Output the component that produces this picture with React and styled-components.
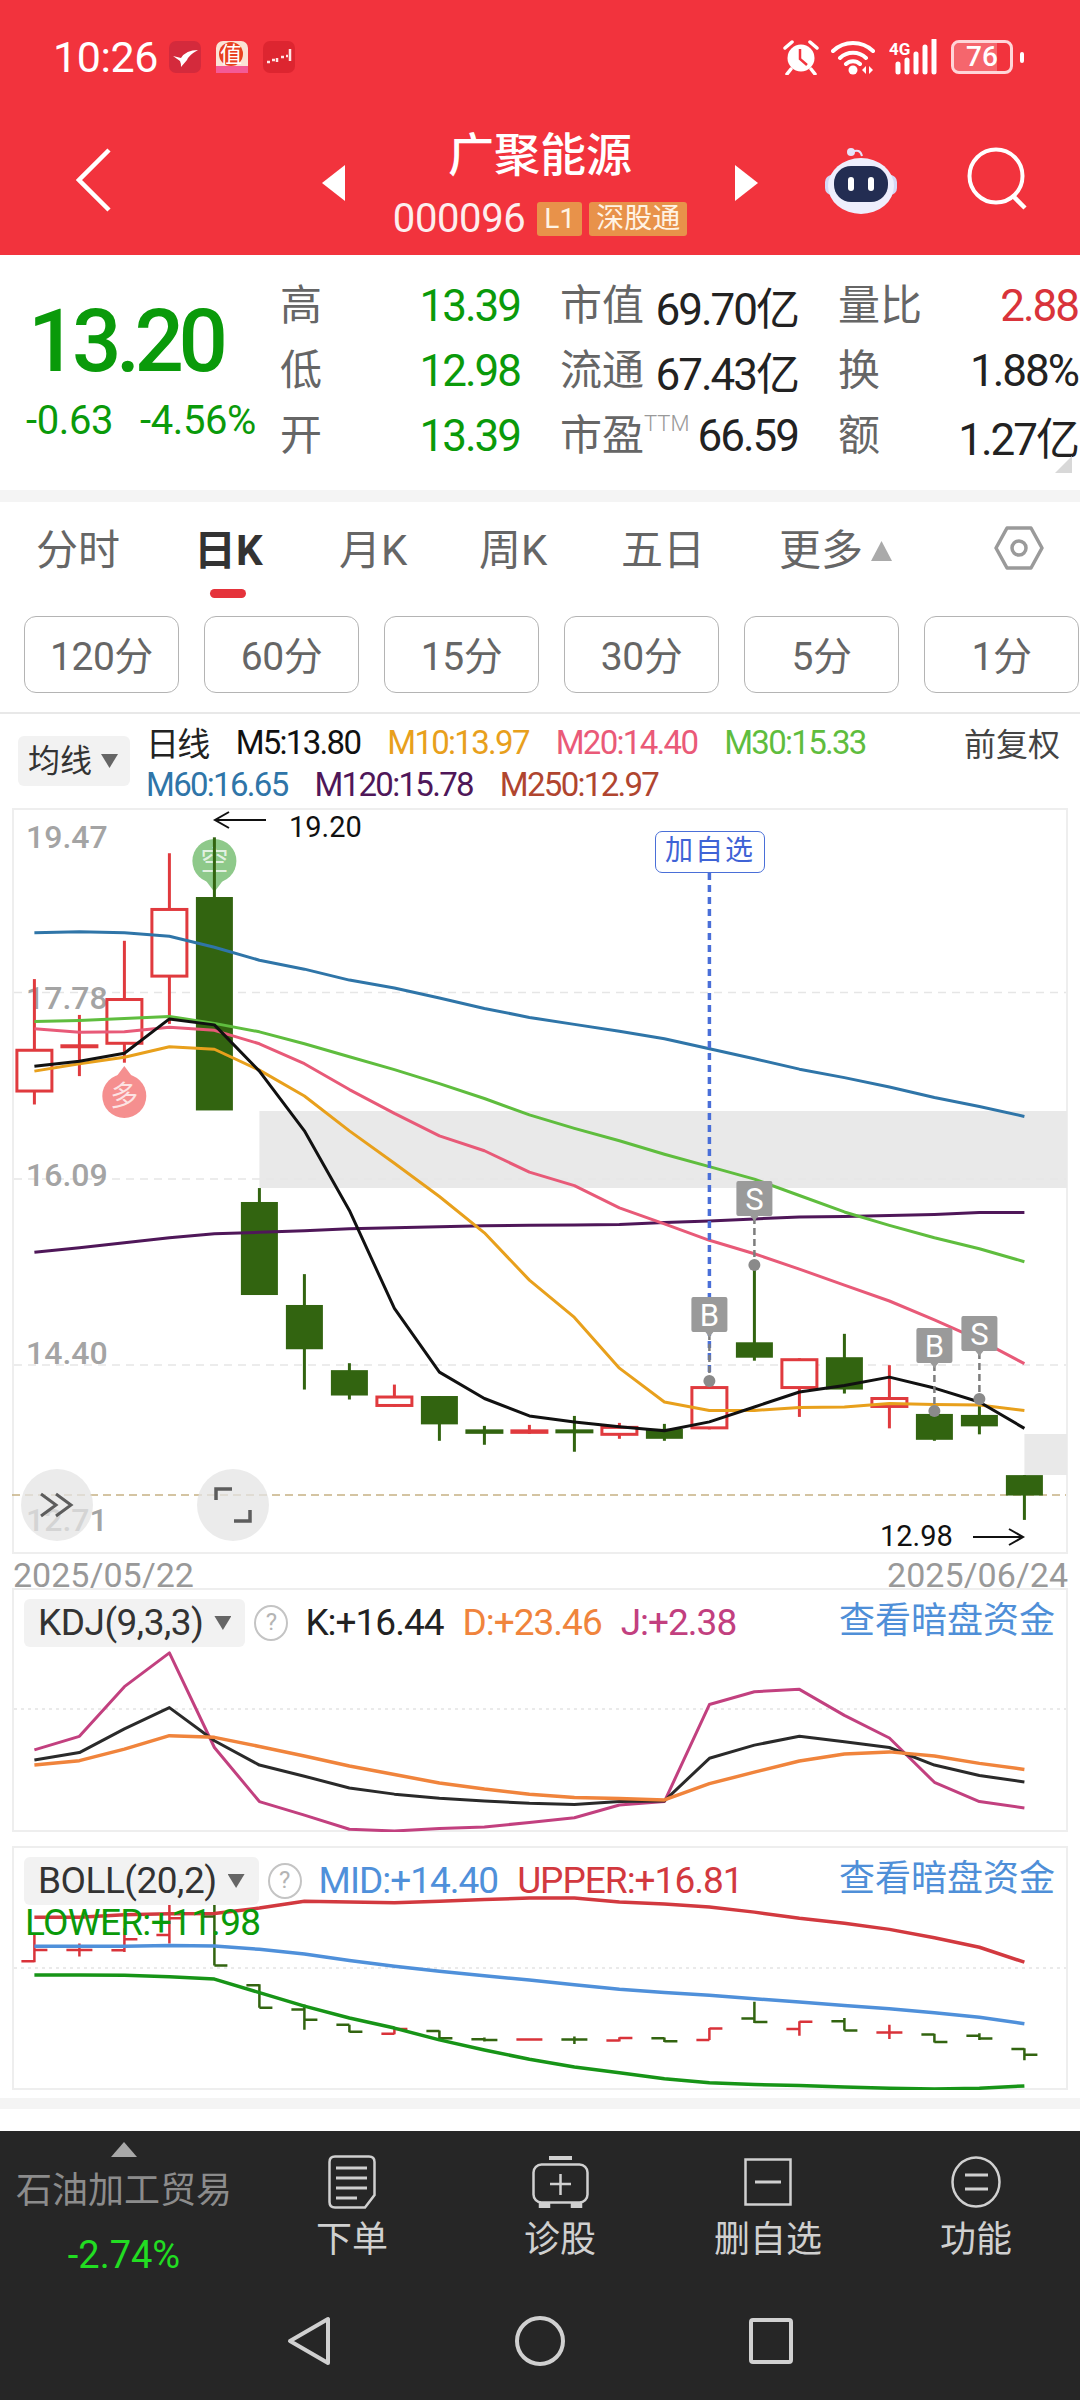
import React from 'react';
import styled, { createGlobalStyle } from 'styled-components';

const FONT = 'Roboto, "Noto Sans CJK SC", sans-serif';
const RED = '#f2333d';
const GREEN = '#0a9a0a';

const cx = (i) => 34.4 + 45 * i;
// chart data was read off in plot units, these map it to page y
const mainY = (z) => 800 + z / 2.01;
const subY = (z) => 1570 + z / 2.958;

const MA_LINES = [
  { color: '#2f75a8', ys: [267, 265, 267, 274, 296, 322, 340, 362, 378, 398, 419, 437, 451, 465, 480, 500, 520, 541, 558, 577, 598, 616, 636] },
  { color: '#4f1759', ys: [909, 900, 890, 880, 872, 869, 866, 862, 860, 858, 856, 855, 854, 853, 849, 846, 842, 838, 837, 835, 833, 829, 829] },
  { color: '#5fbd3e', ys: [445, 443, 439, 435, 449, 466, 490, 516, 542, 570, 600, 633, 660, 685, 712, 737, 762, 795, 828, 855, 880, 902, 928] },
  { color: '#e85a78', ys: [460, 467, 466, 457, 463, 490, 530, 582, 630, 675, 705, 748, 775, 820, 852, 885, 912, 943, 975, 1007, 1045, 1085, 1133] },
  { color: '#e8a01c', ys: [545, 530, 517, 496, 501, 543, 595, 665, 730, 797, 870, 965, 1040, 1142, 1210, 1227, 1227, 1221, 1220, 1213, 1215, 1216, 1227] },
  { color: '#111111', ys: [535, 525, 509, 440, 452, 545, 665, 825, 1022, 1150, 1203, 1238, 1250, 1260, 1268, 1250, 1220, 1190, 1177, 1160, 1182, 1210, 1263] },
];

// top, bottom, wick top, wick bottom, up
const CANDLES = [
  [500, 588, 360, 612, 1], [491, 499, 432, 555, 1], [398, 492, 283, 528, 1], [217, 357, 107, 450, 1],
  [195, 624, 75, 195, 0], [808, 995, 780, 995, 0], [1015, 1104, 953, 1185, 0], [1146, 1197, 1132, 1205, 0],
  [1197, 1220, 1175, 1220, 1], [1198, 1255, 1198, 1288, 0], [1265, 1274, 1258, 1296, 0], [1265, 1274, 1256, 1274, 1],
  [1265, 1271, 1238, 1310, 0], [1258, 1278, 1252, 1284, 1], [1264, 1284, 1254, 1288, 0], [1178, 1265, 1178, 1265, 1],
  [1090, 1121, 935, 1127, 0], [1122, 1184, 1122, 1240, 1], [1120, 1185, 1073, 1193, 0], [1200, 1222, 1136, 1263, 1],
  [1234, 1286, 1234, 1288, 0], [1236, 1259, 1215, 1275, 0], [1357, 1398, 1357, 1447, 0],
];

const KDJ_LINES = [
  { color: '#c2407f', ys: [532, 492, 345, 245, 525, 685, 725, 767, 772, 765, 760, 747, 733, 695, 685, 398, 360, 353, 430, 497, 628, 685, 704] },
  { color: '#2a2a2a', ys: [562, 540, 470, 407, 505, 577, 610, 645, 663, 675, 683, 690, 694, 685, 683, 557, 518, 492, 508, 525, 577, 608, 627] },
  { color: '#f0843c', ys: [577, 564, 530, 490, 495, 522, 550, 580, 605, 630, 648, 663, 673, 676, 680, 632, 598, 565, 544, 538, 550, 572, 590] },
];

const BOLL_LINES = [
  { color: '#d2393f', ys: [1027, 1027, 1020, 1017, 1016, 1000, 980, 982, 984, 980, 975, 970, 970, 982, 988, 997, 1012, 1030, 1045, 1063, 1088, 1116, 1160] },
  { color: '#4f90da', ys: [1113, 1113, 1113, 1111, 1112, 1122, 1136, 1155, 1172, 1187, 1200, 1213, 1227, 1240, 1250, 1258, 1268, 1278, 1288, 1298, 1310, 1323, 1342] },
  { color: '#179417', ys: [1198, 1198, 1199, 1203, 1210, 1250, 1290, 1325, 1355, 1390, 1420, 1447, 1470, 1487, 1505, 1517, 1522, 1525, 1529, 1533, 1535, 1533, 1526] },
];

// high, low, left tick, right tick, up
const BOLL_BARS = [
  [1080, 1160, 1157, 1124, 1], [1105, 1143, 1124, 1124, 1], [1060, 1130, 1125, 1092, 1], [990, 1105, 1080, 1030, 1],
  [985, 1170, 1025, 1170, 0], [1225, 1295, 1228, 1295, 0], [1285, 1360, 1300, 1330, 0], [1345, 1367, 1345, 1366, 0],
  [1355, 1373, 1372, 1358, 1], [1362, 1390, 1364, 1385, 0], [1383, 1395, 1388, 1390, 0], [1385, 1392, 1389, 1389, 1],
  [1380, 1402, 1389, 1389, 0], [1382, 1395, 1392, 1384, 1], [1383, 1396, 1385, 1394, 0], [1355, 1390, 1390, 1356, 1],
  [1277, 1340, 1327, 1337, 0], [1335, 1378, 1358, 1336, 1], [1325, 1362, 1335, 1362, 0], [1345, 1387, 1368, 1368, 1],
  [1372, 1398, 1374, 1396, 0], [1370, 1390, 1378, 1386, 0], [1415, 1450, 1417, 1434, 0],
];

const TRADE_MARKS = [
  { i: 15, letter: 'B', top: 1297, dot: 1381 },
  { i: 16, letter: 'S', top: 1181, dot: 1265 },
  { i: 20, letter: 'B', top: 1328, dot: 1411 },
  { i: 21, letter: 'S', top: 1316, dot: 1399 },
];

const STATS = [
  { label: '高', value: '13.39', color: GREEN },
  { label: '市值', value: '69.70亿' },
  { label: '量比', value: '2.88', color: '#d9333a' },
  { label: '低', value: '12.98', color: GREEN },
  { label: '流通', value: '67.43亿' },
  { label: '换', value: '1.88%' },
  { label: '开', value: '13.39', color: GREEN },
  { label: '市盈', ttm: true, value: '66.59' },
  { label: '额', value: '1.27亿' },
];

const TABS = ['分时', '日K', '月K', '周K', '五日'];
const INTERVALS = ['120分', '60分', '15分', '30分', '5分', '1分'];

function Line({ ys, color, toY, width = 3 }) {
  const points = ys.map((z, i) => `${cx(i)},${toY(z)}`).join(' ');
  return <polyline points={points} fill="none" stroke={color} strokeWidth={width} strokeLinejoin="round" />;
}

function Candle({ data, i }) {
  const [top, bottom, wickTop, wickBottom, up] = data;
  const x = cx(i);
  const y1 = mainY(top);
  const y2 = mainY(bottom);
  const color = up ? '#e03a3e' : '#326410';
  const thin = y2 - y1 < 6;
  return (
    <g>
      <line x1={x} x2={x} y1={mainY(wickTop)} y2={mainY(wickBottom)} stroke={color} strokeWidth="3" />
      {thin ? (
        <rect x={x - 19} y={y1} width="38" height={Math.max(y2 - y1, 4)} fill={color} />
      ) : up ? (
        <rect x={x - 17.5} y={y1 + 1.5} width="35" height={y2 - y1 - 3} fill="#fff" stroke={color} strokeWidth="3" />
      ) : (
        <rect x={x - 18.5} y={y1} width="37" height={y2 - y1} fill={color} />
      )}
    </g>
  );
}

function TradeMark({ i, letter, top, dot }) {
  const x = cx(i);
  return (
    <g>
      <line x1={x} x2={x} y1={top + 36} y2={dot} stroke="#7d7d7d" strokeWidth="2.5" strokeDasharray="7 4" />
      <circle cx={x} cy={dot} r="6" fill="#8a8a8a" />
      <path
        d={`M${x - 18} ${top + 2}q0 -2 2 -2h32q2 0 2 2v31q0 2 -2 2h-12l-4 5l-4 -5h-12q-2 0 -2 -2z`}
        fill="#9a9a9a"
      />
      <MarkLetter x={x} y={top + 29}>{letter}</MarkLetter>
    </g>
  );
}

function MainPlot() {
  return (
    <Plot viewBox="12 808 1056 746">
      <rect x={cx(5)} y="1111" width={1067 - cx(5)} height="77" fill="#e9e9e9" />
      <rect x={cx(22)} y="1434" width={1067 - cx(22)} height="41" fill="#e9e9e9" />
      {[992.5, 1179, 1365].map((y) => (
        <line key={y} x1="14" x2="1066" y1={y} y2={y} stroke="#e6e6e6" strokeWidth="1.5" strokeDasharray="8 6" />
      ))}
      <line x1="12" x2="1066" y1="1495" y2="1495" stroke="#c6b184" strokeWidth="1.5" strokeDasharray="8 5" />

      <AxisLabel x="26" y="848">19.47</AxisLabel>
      <AxisLabel x="26" y="1009">17.78</AxisLabel>
      <AxisLabel x="26" y="1186">16.09</AxisLabel>
      <AxisLabel x="26" y="1364">14.40</AxisLabel>
      <AxisLabel x="26" y="1531">12.71</AxisLabel>

      <circle cx="124.3" cy="1096" r="22" fill="#f58f8f" />
      <path d="M124.3 1066l9 12h-18z" fill="#f58f8f" />
      <MarkGlyph x="124.3" y="1106">多</MarkGlyph>
      <circle cx={cx(4)} cy="861" r="22" fill="#8ec98a" />
      <path d="M214.4 892l9 -12h-18z" fill="#8ec98a" />
      <MarkGlyph x={cx(4)} y="871">空</MarkGlyph>

      {CANDLES.map((c, i) => (
        <Candle key={i} data={c} i={i} />
      ))}
      {MA_LINES.map((l) => (
        <Line key={l.color} ys={l.ys} color={l.color} toY={mainY} />
      ))}

      <line x1={cx(15)} x2={cx(15)} y1="873" y2="1381" stroke="#4a6fd8" strokeWidth="3.5" strokeDasharray="7 5" />
      {TRADE_MARKS.map((m) => (
        <TradeMark key={m.i} {...m} />
      ))}

      <path d="M266 820h-50M229 812l-14 8l14 8" fill="none" stroke="#111" strokeWidth="2" />
      <PriceNote x="289" y="837">19.20</PriceNote>
      <PriceNote x="880" y="1546">12.98</PriceNote>
      <path d="M973 1537h50M1009 1529l14 8l-14 8" fill="none" stroke="#111" strokeWidth="2" />
    </Plot>
  );
}

function KdjPlot() {
  return (
    <Plot viewBox="12 1588 1056 244">
      <line x1="14" x2="1066" y1="1709" y2="1709" stroke="#e4e4e4" strokeWidth="1.5" strokeDasharray="3 4" />
      {KDJ_LINES.map((l) => (
        <Line key={l.color} ys={l.ys} color={l.color} toY={subY} width={l.color === '#f0843c' ? 3.5 : 3} />
      ))}
    </Plot>
  );
}

function BollPlot() {
  return (
    <Plot viewBox="12 1846 1056 244">
      <line x1="14" x2="1066" y1="1968" y2="1968" stroke="#e4e4e4" strokeWidth="1.5" strokeDasharray="3 4" />
      {BOLL_BARS.map(([hi, lo, left, right, up], i) => {
        const x = cx(i);
        return (
          <path
            key={i}
            d={`M${x} ${subY(hi)}V${subY(lo)}M${x - 13} ${subY(left)}H${x}M${x} ${subY(right)}H${x + 13}`}
            fill="none"
            stroke={up ? '#d9333a' : '#326410'}
            strokeWidth="2.5"
          />
        );
      })}
      {BOLL_LINES.map((l) => (
        <Line key={l.color} ys={l.ys} color={l.color} toY={subY} width={3.5} />
      ))}
    </Plot>
  );
}

function StatusIcons() {
  return (
    <StatusRight>
      <svg width="36" height="36" viewBox="0 0 36 36">
        <circle cx="18" cy="19" r="13.5" fill="#fff" />
        <path d="M17 10v10l7 6" fill="none" stroke={RED} strokeWidth="2.5" />
        <path d="M2 9l7-6M34 9l-7-6M8 30l-4 5M28 30l4 5" stroke="#fff" strokeWidth="3.5" strokeLinecap="round" />
      </svg>
      <svg width="46" height="36" viewBox="0 0 46 36">
        <path d="M2 12a29 29 0 0 1 40 0M9 19a19 19 0 0 1 26 0M15 25a10 10 0 0 1 14 0" fill="none" stroke="#fff" strokeWidth="4" strokeLinecap="round" />
        <circle cx="22" cy="31" r="4.5" fill="#fff" />
        <path d="M35 27l-4 4l4 4zM38 27l4 4l-4 4z" fill="#fff" />
      </svg>
      <svg width="50" height="36" viewBox="0 0 50 36">
        <NetworkText x="0" y="16">4G</NetworkText>
        <path d="M9 25v8M18 21v12M27 15v18M36 8v25M45 1v32" stroke="#fff" strokeWidth="5" strokeLinecap="round" />
      </svg>
      <Battery>
        <BatteryFill />
        <BatteryValue>76</BatteryValue>
      </Battery>
      <BatteryTip />
    </StatusRight>
  );
}

function AppIcons() {
  return (
    <>
      <svg width="32" height="32" viewBox="0 0 32 32">
        <rect width="32" height="32" rx="7" fill="#d42a3c" />
        <path d="M4 15l8 2q5-8 17-8q-9 5-11 10l-6 7q0-4-1-6z" fill="#fff" />
      </svg>
      <svg width="32" height="32" viewBox="0 0 32 32">
        <rect width="32" height="32" rx="7" fill="#fbe3d6" />
        <rect y="25" width="32" height="7" fill="#f45a96" />
        <circle cx="15" cy="13" r="12" fill="#e8401f" />
        <AppGlyph x="15" y="21">值</AppGlyph>
      </svg>
      <svg width="32" height="32" viewBox="0 0 32 32">
        <rect width="32" height="32" rx="7" fill="#dd2530" />
        <path d="M4 21h3M9 19h3M14 17v4M18 16h3M23 15h2M27 8v12" stroke="#ffe4e4" strokeWidth="2.5" />
      </svg>
    </>
  );
}

function RobotIcon() {
  return (
    <svg width="72" height="68" viewBox="0 0 72 68">
      <path d="M27 5q8 -4 10 4" fill="none" stroke="#e6e3fa" strokeWidth="2" />
      <circle cx="26" cy="5" r="4" fill="#e6e3fa" />
      <rect x="0" y="28" width="72" height="20" rx="7" fill="#d5d7f5" />
      <ellipse cx="36" cy="39" rx="33" ry="28" fill="#eeeefc" />
      <rect x="9" y="19" width="54" height="36" rx="17" fill="#232d52" />
      <rect x="23" y="30" width="6" height="14" rx="3" fill="#fff" />
      <rect x="43" y="30" width="6" height="14" rx="3" fill="#fff" />
    </svg>
  );
}

function DocIcon() {
  return (
    <svg width="48" height="54" viewBox="0 0 48 54" fill="none" stroke="#d0d0d0" strokeWidth="2.5">
      <path d="M7 1.500h34q5.500 0 5.500 5.500v33L37 52.500H7q-5.500 0-5.500-5.500V7q0-5.500 5.500-5.500z" />
      <path d="M8 13h31M8 23h31M8 33h31M8 43h21" strokeWidth="3" />
    </svg>
  );
}

function WatchIcon() {
  return (
    <svg width="57" height="52" viewBox="0 0 57 52" fill="none" stroke="#d0d0d0" strokeWidth="2.5">
      <path d="M17 2h23" strokeWidth="4" />
      <rect x="1.500" y="8.500" width="54" height="38" rx="8" />
      <path d="M28.500 18v21M18 28h21" />
      <path d="M8 48h9v3H8zM40 48h9v3h-9z" fill="#d0d0d0" />
    </svg>
  );
}

function RemoveIcon() {
  return (
    <svg width="48" height="48" viewBox="0 0 48 48" fill="none" stroke="#d0d0d0" strokeWidth="2.5">
      <rect x="1.500" y="1.500" width="45" height="45" />
      <path d="M11 24h26" strokeWidth="3" />
    </svg>
  );
}

function MenuIcon() {
  return (
    <svg width="50" height="52" viewBox="0 0 50 52" fill="none" stroke="#d0d0d0" strokeWidth="2.500">
      <ellipse cx="25" cy="26" rx="23.500" ry="24.500" />
      <path d="M14 19h23M14 33h23" strokeWidth="3" />
    </svg>
  );
}

const NAV_ITEMS = [
  { label: '下单', Icon: DocIcon },
  { label: '诊股', Icon: WatchIcon },
  { label: '删自选', Icon: RemoveIcon },
  { label: '功能', Icon: MenuIcon },
];

export default function App() {
  return (
    <Page>
      <GlobalStyle />
      <Header>
        <StatusBar>
          <StatusLeft>
            <Clock>10:26</Clock>
            <AppIcons />
          </StatusLeft>
          <StatusIcons />
        </StatusBar>
        <TitleBar>
          <BackCell>
            <svg width="36" height="64" viewBox="0 0 36 64">
              <path d="M33 2L3 32l30 30" fill="none" stroke="#fff" strokeWidth="4.500" />
            </svg>
          </BackCell>
          <TitleCell>
            <Arrow $dir="left" />
            <TitleText>
              <StockName>广聚能源</StockName>
              <CodeRow>
                <StockCode>000096</StockCode>
                <Badge>L1</Badge>
                <Badge>深股通</Badge>
              </CodeRow>
            </TitleText>
            <Arrow $dir="right" />
          </TitleCell>
          <ActionCell>
            <RobotIcon />
            <svg width="64" height="64" viewBox="0 0 64 64">
              <circle cx="30" cy="29" r="26.500" fill="none" stroke="#fff" strokeWidth="4" />
              <path d="M46 48l13 13" stroke="#fff" strokeWidth="4.500" />
            </svg>
          </ActionCell>
        </TitleBar>
      </Header>

      <Quote>
        <PriceBox>
          <Price>13.20</Price>
          <Change>
            <span>-0.63</span>
            <span>-4.56%</span>
          </Change>
        </PriceBox>
        <StatsGrid>
          {STATS.map((s) => (
            <Stat key={s.label}>
              <StatLabel>
                {s.label}
                {s.ttm && <Ttm>TTM</Ttm>}
              </StatLabel>
              <StatValue $color={s.color}>{s.value}</StatValue>
            </Stat>
          ))}
        </StatsGrid>
        <CornerMark />
      </Quote>
      <Strip />

      <Tabs>
        {TABS.map((t) => (
          <Tab key={t} $active={t === '日K'}>{t}</Tab>
        ))}
        <Tab>
          更多<MoreCaret />
        </Tab>
        <svg width="50" height="44" viewBox="0 0 50 44" fill="none" stroke="#9a9a9a" strokeWidth="3.500">
          <path d="M13 2h24l11 20l-11 20H13L2 22z" strokeLinejoin="round" />
          <circle cx="25" cy="22" r="7" />
        </svg>
      </Tabs>

      <Intervals>
        {INTERVALS.map((t) => (
          <IntervalBtn key={t}>{t}</IntervalBtn>
        ))}
      </Intervals>

      <Legend>
        <MaSelector>
          均线<Caret />
        </MaSelector>
        <LegendLines>
          <LegendRow>
            <LegendItem $color="#222">日线</LegendItem>
            <LegendItem $color="#111">M5:13.80</LegendItem>
            <LegendItem $color="#e8a01c">M10:13.97</LegendItem>
            <LegendItem $color="#ea5a78">M20:14.40</LegendItem>
            <LegendItem $color="#5fbd3e">M30:15.33</LegendItem>
            <Adjust>前复权</Adjust>
          </LegendRow>
          <LegendRow>
            <LegendItem $color="#2f75a8">M60:16.65</LegendItem>
            <LegendItem $color="#4f1759">M120:15.78</LegendItem>
            <LegendItem $color="#b0452f">M250:12.97</LegendItem>
          </LegendRow>
        </LegendLines>
      </Legend>

      <MainPanel>
        <MainPlot />
        <WatchTag>加自选</WatchTag>
        <RoundBtn $left={7}>
          <svg width="36" height="26" viewBox="0 0 36 26" fill="none" stroke="#5d5d5d" strokeWidth="3">
            <path d="M2 2l15 11L2 24M17 2l15 11l-15 11" />
          </svg>
        </RoundBtn>
        <RoundBtn $left={183}>
          <svg width="38" height="36" viewBox="0 0 38 36" fill="none" stroke="#5d5d5d" strokeWidth="3.500">
            <path d="M2 13V2h16M36 23v11H20" />
          </svg>
        </RoundBtn>
      </MainPanel>

      <DateRow>
        <span>2025/05/22</span>
        <span>2025/06/24</span>
      </DateRow>

      <SubPanel>
        <KdjPlot />
        <SubHeader>
          <IndicatorSelector>
            KDJ(9,3,3)<Caret />
          </IndicatorSelector>
          <Help>?</Help>
          <Reading $color="#222">K:+16.44</Reading>
          <Reading $color="#f0843c">D:+23.46</Reading>
          <Reading $color="#c2407f">J:+2.38</Reading>
          <FundLink>查看暗盘资金</FundLink>
        </SubHeader>
      </SubPanel>

      <SubPanel $gap>
        <BollPlot />
        <SubHeader>
          <IndicatorSelector>
            BOLL(20,2)<Caret />
          </IndicatorSelector>
          <Help>?</Help>
          <Reading $color="#4f90da">MID:+14.40</Reading>
          <Reading $color="#d2393f">UPPER:+16.81</Reading>
          <FundLink>查看暗盘资金</FundLink>
        </SubHeader>
        <LowerReading>LOWER:+11.98</LowerReading>
      </SubPanel>

      <BottomStrip />

      <BottomBar>
        <ActionRow>
          <Sector>
            <SectorCaret />
            <SectorName>石油加工贸易</SectorName>
            <SectorChange>-2.74%</SectorChange>
          </Sector>
          {NAV_ITEMS.map(({ label, Icon }) => (
            <NavItem key={label}>
              <NavIconBox>
                <Icon />
              </NavIconBox>
              <NavLabel>{label}</NavLabel>
            </NavItem>
          ))}
        </ActionRow>
        <SystemNav>
          <svg width="44" height="50" viewBox="0 0 44 50" fill="none" stroke="#d0d0d0" strokeWidth="4">
            <path d="M41 3v44L3 25z" strokeLinejoin="round" />
          </svg>
          <svg width="50" height="50" viewBox="0 0 50 50" fill="none" stroke="#d0d0d0" strokeWidth="4">
            <circle cx="25" cy="25" r="23" />
          </svg>
          <svg width="44" height="46" viewBox="0 0 44 46" fill="none" stroke="#d0d0d0" strokeWidth="4">
            <rect x="2" y="2" width="40" height="42" rx="2" />
          </svg>
        </SystemNav>
      </BottomBar>
    </Page>
  );
}

const GlobalStyle = createGlobalStyle`
  html, body {
    margin: 0;
    padding: 0;
    background: #fff;
  }
  * {
    box-sizing: border-box;
  }
`;

const Page = styled.div`
  width: 1080px;
  height: 2400px;
  overflow: hidden;
  display: flex;
  flex-direction: column;
  background: #fff;
  font-family: ${FONT};
`;

const Header = styled.header`
  height: 255px;
  background: ${RED};
  color: #fff;
`;

const StatusBar = styled.div`
  height: 115px;
  padding: 39px 56px 0 53px;
  display: flex;
  justify-content: space-between;
  align-items: flex-start;
`;

const StatusLeft = styled.div`
  display: flex;
  align-items: center;
  gap: 15px;
  height: 36px;
`;

const Clock = styled.span`
  font-size: 43px;
  line-height: 36px;
  letter-spacing: -0.4px;
  margin-right: -3px;
  width: 104px;
`;

const StatusRight = styled.div`
  display: flex;
  align-items: center;
  gap: 12px;
  height: 36px;
`;

const NetworkText = styled.text`
  font-family: ${FONT};
  font-size: 17px;
  font-weight: 700;
  fill: #fff;
`;

const Battery = styled.div`
  position: relative;
  width: 62px;
  height: 34px;
  border: 3px solid #ffd5d8;
  border-radius: 8px;
  overflow: hidden;
  display: flex;
  align-items: center;
  justify-content: center;
`;

const BatteryFill = styled.div`
  position: absolute;
  left: 0;
  top: 0;
  bottom: 0;
  width: 76%;
  background: rgba(255, 255, 255, 0.25);
`;

const BatteryValue = styled.span`
  position: relative;
  font-size: 28px;
  line-height: 28px;
  font-weight: 500;
`;

const BatteryTip = styled.div`
  width: 4px;
  height: 11px;
  margin-left: -5px;
  border-radius: 2px;
  background: #fff;
`;

const AppGlyph = styled.text`
  font-family: ${FONT};
  font-size: 22px;
  fill: #fff;
  text-anchor: middle;
`;

const TitleBar = styled.div`
  height: 140px;
  display: grid;
  grid-template-columns: 322px 436px 1fr;
`;

const BackCell = styled.div`
  padding: 33px 0 0 76px;
`;

const TitleCell = styled.div`
  display: flex;
  justify-content: space-between;
  align-items: flex-start;
`;

const Arrow = styled.div`
  width: 23px;
  height: 36px;
  margin-top: 50px;
  background: #fff;
  clip-path: ${(p) =>
    p.$dir === 'left' ? 'polygon(100% 0, 100% 100%, 0 50%)' : 'polygon(0 0, 100% 50%, 0 100%)'};
`;

const TitleText = styled.div`
  display: flex;
  flex-direction: column;
  align-items: center;
`;

const StockName = styled.div`
  margin-top: 10px;
  font-size: 46px;
  line-height: 60px;
  font-weight: 500;
`;

const CodeRow = styled.div`
  margin-top: 17px;
  display: flex;
  align-items: center;
  gap: 7px;
`;

const StockCode = styled.span`
  margin-right: 5px;
  font-size: 40px;
  line-height: 34px;
  letter-spacing: -0.4px;
  color: #fdeeee;
`;

const Badge = styled.span`
  height: 34px;
  padding: 0 7px;
  border-radius: 3px;
  background: #e8924a;
  color: #fff3e4;
  font-size: 28px;
  line-height: 34px;
`;

const ActionCell = styled.div`
  padding: 32px 0 0 67px;
  display: flex;
  align-items: flex-start;
  gap: 69px;
`;

const Quote = styled.section`
  position: relative;
  height: 235px;
  display: flex;
`;

const PriceBox = styled.div`
  width: 280px;
  padding: 36px 0 0 26px;
`;

const Price = styled.div`
  padding-left: 2px;
  color: ${GREEN};
  font-size: 87px;
  line-height: 100px;
  font-weight: 500;
  letter-spacing: -5.500px;
`;

const Change = styled.div`
  margin-top: 8px;
  display: flex;
  gap: 27px;
  color: ${GREEN};
  font-size: 40px;
  line-height: 44px;
  letter-spacing: -0.4px;
  white-space: nowrap;
`;

const StatsGrid = styled.div`
  padding-top: 18px;
  display: grid;
  grid-template-columns: 240px 238px 240px;
  grid-auto-rows: 65px;
  column-gap: 40px;
`;

const Stat = styled.div`
  display: flex;
  align-items: center;
  justify-content: space-between;
  white-space: nowrap;
`;

const StatLabel = styled.span`
  margin-bottom: 8px;
  color: #666;
  font-size: 42px;
  display: flex;
  align-items: flex-start;
`;

const Ttm = styled.span`
  font-size: 22px;
  color: #999;
  font-weight: 300;
  margin-top: 10px;
`;

const StatValue = styled.span`
  color: ${(p) => p.$color || '#222'};
  font-size: 44px;
  letter-spacing: -2px;
`;

const CornerMark = styled.div`
  position: absolute;
  right: 8px;
  bottom: 17px;
  width: 17px;
  height: 17px;
  background: #d8d8d8;
  clip-path: polygon(100% 0, 100% 100%, 0 100%);
`;

const Strip = styled.div`
  height: 12px;
  background: #f4f4f4;
`;

const Tabs = styled.nav`
  height: 104px;
  padding: 24px 0 0 36px;
  display: grid;
  grid-template-columns: 158px 145px 140px 142px 158px 215px 50px;
  align-items: start;
`;

const Tab = styled.div`
  position: relative;
  height: 50px;
  color: ${(p) => (p.$active ? '#333' : '#666')};
  font-size: 42px;
  line-height: 50px;
  font-weight: ${(p) => (p.$active ? 700 : 400)};
  display: flex;
  align-items: center;
  &::after {
    content: '';
    display: ${(p) => (p.$active ? 'block' : 'none')};
    position: absolute;
    left: 16px;
    top: 63px;
    width: 36px;
    height: 9px;
    border-radius: 5px;
    background: #e5333b;
  }
`;

const MoreCaret = styled.i`
  width: 21px;
  height: 20px;
  margin-left: 8px;
  background: #aaa;
  clip-path: polygon(50% 0, 100% 100%, 0 100%);
`;

const Intervals = styled.div`
  margin-top: 10px;
  padding: 0 0 19px 24px;
  display: flex;
  gap: 25px;
  border-bottom: 2px solid #e8e8e8;
`;

const IntervalBtn = styled.div`
  flex: 0 0 155px;
  height: 77px;
  padding-top: 3px;
  border: 1.500px solid #b4b4b4;
  border-radius: 12px;
  color: #666;
  font-size: 39px;
  letter-spacing: -0.5px;
  line-height: 74px;
  text-align: center;
`;

const Legend = styled.div`
  height: 94px;
  padding: 7px 0 0 18px;
  display: flex;
  align-items: flex-start;
`;

const MaSelector = styled.div`
  height: 50px;
  margin-top: 15px;
  padding: 0 12px 0 10px;
  border-radius: 6px;
  background: #f2f2f2;
  color: #333;
  font-size: 32px;
  line-height: 50px;
  display: flex;
  align-items: center;
  gap: 9px;
  white-space: nowrap;
`;

const IndicatorSelector = styled.div`
  height: 48px;
  padding: 0 14px;
  border-radius: 6px;
  background: #f2f2f2;
  color: #333;
  font-size: 37px;
  line-height: 48px;
  letter-spacing: -0.5px;
  display: flex;
  align-items: center;
  gap: 11px;
  white-space: nowrap;
`;

const Caret = styled.i`
  width: 17px;
  height: 14px;
  background: #666;
  clip-path: polygon(0 0, 100% 0, 50% 100%);
`;

const LegendLines = styled.div`
  flex: 1;
  padding-left: 16px;
`;

const LegendRow = styled.div`
  height: 42px;
  display: flex;
  align-items: center;
  gap: 27px;
`;

const LegendItem = styled.span`
  color: ${(p) => p.$color};
  font-size: 33px;
  letter-spacing: -1.700px;
  white-space: nowrap;
`;

const Adjust = styled.span`
  margin-left: auto;
  margin-right: 20px;
  color: #444;
  font-size: 32px;
`;

const MainPanel = styled.section`
  position: relative;
  flex: 0 0 746px;
  margin: 0 12px;
  border: 2px solid #eeeeee;
`;

const Plot = styled.svg`
  position: absolute;
  left: -2px;
  top: -2px;
  width: 1056px;
  height: calc(100% + 4px);
  font-family: ${FONT};
`;

const AxisLabel = styled.text`
  font-size: 32px;
  font-weight: 500;
  fill: #a4a4a4;
`;

const PriceNote = styled.text`
  font-size: 29px;
  fill: #111;
`;

const MarkGlyph = styled.text`
  font-size: 28px;
  fill: #fff;
  fill-opacity: 0.75;
  text-anchor: middle;
`;

const MarkLetter = styled.text`
  font-size: 31px;
  fill: #fff;
  text-anchor: middle;
`;

const WatchTag = styled.div`
  position: absolute;
  left: 641px;
  top: 21px;
  width: 110px;
  height: 42px;
  border: 1.500px solid #4a6fd8;
  border-radius: 7px;
  background: #fff;
  color: #3f63d6;
  font-size: 28px;
  line-height: 38px;
  letter-spacing: 2px;
  text-align: center;
`;

const RoundBtn = styled.div`
  position: absolute;
  left: ${(p) => p.$left}px;
  top: 659px;
  width: 72px;
  height: 72px;
  border-radius: 50%;
  background: rgba(228, 228, 228, 0.75);
  display: flex;
  align-items: center;
  justify-content: center;
`;

const DateRow = styled.div`
  height: 34px;
  padding: 0 12px 0 13px;
  display: flex;
  justify-content: space-between;
  align-items: flex-start;
  color: #999;
  font-size: 34px;
  line-height: 42px;
  white-space: nowrap;
`;

const SubPanel = styled.section`
  position: relative;
  flex: 0 0 244px;
  margin: ${(p) => (p.$gap ? '14px' : '0')} 12px 0;
  border: 2px solid #eeeeee;
`;

const SubHeader = styled.div`
  position: relative;
  padding: 9px 12px 0 10px;
  display: flex;
  align-items: center;
  gap: 9px;
`;

const Help = styled.span`
  flex: 0 0 34px;
  height: 36px;
  margin-right: 8px;
  border: 2.500px solid #c4c4c4;
  border-radius: 50%;
  color: #b4b4b4;
  font-size: 24px;
  line-height: 31px;
  text-align: center;
`;

const Reading = styled.span`
  margin-right: 10px;
  color: ${(p) => p.$color};
  font-size: 37px;
  line-height: 44px;
  letter-spacing: -1px;
  white-space: nowrap;
`;

const FundLink = styled.span`
  margin: 0 -1px 4px auto;
  color: #4f8fd8;
  font-size: 36px;
  line-height: 44px;
  white-space: nowrap;
`;

const LowerReading = styled.div`
  position: relative;
  margin: 0 0 0 11px;
  color: ${GREEN};
  font-size: 37px;
  line-height: 36px;
  letter-spacing: -0.7px;
`;

const BottomStrip = styled.div`
  height: 11px;
  margin-top: 8px;
  margin-bottom: 22px;
  background: #f4f4f4;
`;

const BottomBar = styled.footer`
  flex: 1;
  background: #262626;
  display: flex;
  flex-direction: column;
`;

const ActionRow = styled.div`
  height: 150px;
  display: grid;
  grid-template-columns: 248px repeat(4, 208px);
`;

const Sector = styled.div`
  padding-top: 11px;
  display: flex;
  flex-direction: column;
  align-items: center;
`;

const SectorCaret = styled.i`
  width: 26px;
  height: 15px;
  background: #a8a8a8;
  clip-path: polygon(50% 0, 100% 100%, 0 100%);
`;

const SectorName = styled.div`
  margin-top: 12px;
  color: #8c8c8c;
  font-size: 36px;
  line-height: 44px;
  white-space: nowrap;
`;

const SectorChange = styled.div`
  margin-top: 20px;
  color: #22dd22;
  font-size: 38px;
  line-height: 44px;
`;

const NavItem = styled.div`
  padding-top: 23px;
  display: flex;
  flex-direction: column;
  align-items: center;
`;

const NavIconBox = styled.div`
  height: 56px;
  display: flex;
  align-items: center;
`;

const NavLabel = styled.div`
  margin-top: 8px;
  color: #d0d0d0;
  font-size: 36px;
  line-height: 44px;
`;

const SystemNav = styled.div`
  flex: 1;
  padding: 0 194px 0 193px;
  display: grid;
  grid-template-columns: repeat(3, 231px);
  justify-items: center;
  align-items: center;
`;
